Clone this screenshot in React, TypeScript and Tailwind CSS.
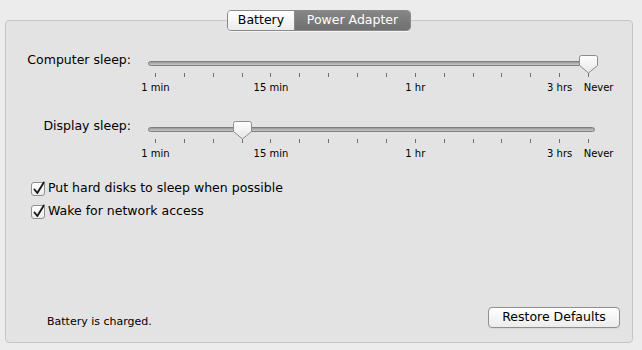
import React from "react";

const FONT = { fontFamily: '"DejaVu Sans", "Noto Sans", sans-serif' };

const TICKS = Array.from({ length: 16 }, (_, i) => i);

const LABELS = [
  { text: "1 min", cls: "col-start-1" },
  { text: "15 min", cls: "col-start-5" },
  { text: "1 hr", cls: "col-start-10" },
  { text: "3 hrs", cls: "col-start-15" },
];

function Thumb({ left }: { left: number }) {
  return (
    <svg
      width="19"
      height="19"
      viewBox="0 0 19 19"
      className="absolute top-0"
      style={{ left }}
    >
      <defs>
        <linearGradient id="thumbFill" x1="0" y1="0" x2="0" y2="1">
          <stop offset="0" stopColor="#ffffff" />
          <stop offset="1" stopColor="#e6e6e6" />
        </linearGradient>
      </defs>
      <path
        d="M2.5 0.5 H16.5 Q18.5 0.5 18.5 2.5 V10.5 L9.5 18 L0.5 10.5 V2.5 Q0.5 0.5 2.5 0.5 Z"
        fill="url(#thumbFill)"
        stroke="#8c8c8c"
      />
    </svg>
  );
}

function SleepSlider({ label, value }: { label: string; value: number }) {
  // tick centre inside the scale: 14.44 + i * 28.87
  const thumbLeft = 14.44 + value * 28.87 - 9.5;
  return (
    <div className="flex items-start">
      <div className="w-[125px] text-right text-[12.5px] leading-[16px] text-black">{label}</div>
      <div className="ml-[10px] w-[462px]">
        <div className="relative mt-[3px] h-[18px]">
          <div className="absolute left-[7px] top-[6px] h-[5px] w-[447px] rounded-full border border-[#7e7e7e] bg-gradient-to-b from-[#9a9a9a] to-[#c9c9c9]" />
          <Thumb left={thumbLeft} />
        </div>
        <div className="grid grid-cols-16 h-[4px]">
          {TICKS.map((t) => (
            <div key={t} className="flex justify-center">
              <div className="w-px h-[4px] bg-[#6e6e6e]" />
            </div>
          ))}
        </div>
        <div className="grid grid-cols-16 mt-[5px] text-[10px] leading-[12px] text-black">
          {LABELS.map((l) => (
            <div key={l.text} className={`${l.cls} flex justify-center whitespace-nowrap`}>
              {l.text}
            </div>
          ))}
          <div className="col-start-16 flex justify-center whitespace-nowrap pl-[20px]">Never</div>
        </div>
      </div>
    </div>
  );
}

function CheckRow({ text }: { text: string }) {
  return (
    <div className="flex items-center h-[23px]">
      <div className="relative w-[14px] h-[14px] rounded-[3px] border border-[#8f8f8f] bg-gradient-to-b from-white to-[#ececec]">
        <svg width="14" height="15" viewBox="0 0 14 15" className="absolute left-0 -top-[2px]">
          <path d="M2.5 8.5 L5.3 12 L11.8 1.5" fill="none" stroke="#1a1a1a" strokeWidth="1.9" strokeLinecap="round" strokeLinejoin="round" />
        </svg>
      </div>
      <span className="ml-[3px] text-[12.5px] text-black">{text}</span>
    </div>
  );
}

export default function App() {
  return (
    <div className="w-[642px] h-[350px] bg-[#ececec] overflow-hidden" style={FONT}>
      <div className="pl-[5px] pt-[10px]">
        <div className="w-[628px] flex justify-center relative z-10">
          <div className="flex h-[21px] rounded-[4px] border border-[#8a8a8a] overflow-hidden text-[12.5px] shadow-[0_1px_0_rgba(255,255,255,0.6)]">
            <div className="w-[67px] flex items-center justify-center bg-gradient-to-b from-white to-[#ececec] text-black border-r border-[#8a8a8a]">
              Battery
            </div>
            <div className="w-[115px] flex items-center justify-center bg-gradient-to-b from-[#868686] to-[#707070] text-white">
              Power Adapter
            </div>
          </div>
        </div>

        <div className="-mt-[11px] w-[628px] h-[323px] rounded-[4px] border border-[#c6c6c6] bg-[#e3e3e3] flex flex-col">
          <div className="pt-[31px]">
            <SleepSlider label="Computer sleep:" value={15} />
          </div>
          <div className="mt-[24px]">
            <SleepSlider label="Display sleep:" value={3} />
          </div>

          <div className="mt-[17px] pl-[25px]">
            <CheckRow text="Put hard disks to sleep when possible" />
            <CheckRow text="Wake for network access" />
          </div>

          <div className="mt-auto flex items-end justify-between pl-[41px] pr-[12px] pb-[14px]">
            <span className="text-[11px] leading-[14px] -mb-[1px] text-black">Battery is charged.</span>
            <button className="w-[132px] h-[21px] rounded-[4px] border border-[#8f8f8f] bg-gradient-to-b from-white to-[#ececec] text-[12.5px] text-black shadow-[0_1px_0_rgba(0,0,0,0.05)]">
              Restore Defaults
            </button>
          </div>
        </div>
      </div>
    </div>
  );
}
